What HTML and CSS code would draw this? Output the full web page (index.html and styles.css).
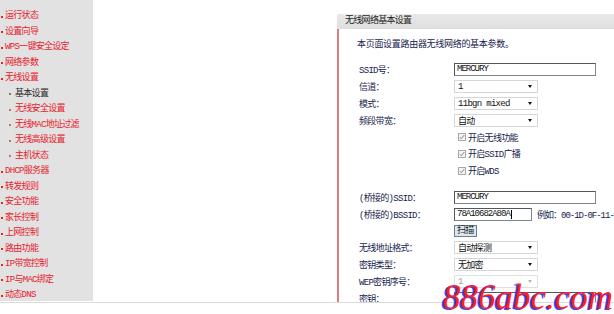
FILE: index.html
```html
<!DOCTYPE html>
<html lang="zh-CN">
<head>
<meta charset="utf-8">
<title>无线网络基本设置</title>
<link rel="stylesheet" href="styles.css">
</head>
<body>
<div class="page">
  <div class="frame">
    <nav class="menu">
      <div class="item top">运行状态</div>
      <div class="item top">设置向导</div>
      <div class="item top">WPS一键安全设定</div>
      <div class="item top">网络参数</div>
      <div class="item top">无线设置</div>
      <div class="item sub current">基本设置</div>
      <div class="item sub">无线安全设置</div>
      <div class="item sub">无线MAC地址过滤</div>
      <div class="item sub">无线高级设置</div>
      <div class="item sub">主机状态</div>
      <div class="item top">DHCP服务器</div>
      <div class="item top">转发规则</div>
      <div class="item top">安全功能</div>
      <div class="item top">家长控制</div>
      <div class="item top">上网控制</div>
      <div class="item top">路由功能</div>
      <div class="item top">IP带宽控制</div>
      <div class="item top">IP与MAC绑定</div>
      <div class="item top">动态DNS</div>
    </nav>
    <section class="panel">
      <div class="panel-head">无线网络基本设置</div>
      <div class="panel-body">
        <p class="desc">本页面设置路由器无线网络的基本参数。</p>
        <div class="form">
          <div class="row"><span class="label">SSID号：</span><span class="input wide">MERCURY</span></div>
          <div class="row"><span class="label">信道：</span><span class="select"><span>1</span><i class="arrow"></i></span></div>
          <div class="row"><span class="label">模式：</span><span class="select"><span>11bgn mixed</span><i class="arrow"></i></span></div>
          <div class="row"><span class="label">频段带宽：</span><span class="select"><span>自动</span><i class="arrow"></i></span></div>
          <div class="row"><span class="label"></span><span class="check"><svg width="8" height="8" viewBox="0 0 8 8"><rect x="0.5" y="0.5" width="7" height="7" fill="#f4f4f4" stroke="#a8a8a8"/><path d="M1.8 4.2 L3.3 5.7 L6.2 2.1" stroke="#7a8a7a" stroke-width="1" fill="none"/></svg>开启无线功能</span></div>
          <div class="row"><span class="label"></span><span class="check"><svg width="8" height="8" viewBox="0 0 8 8"><rect x="0.5" y="0.5" width="7" height="7" fill="#f4f4f4" stroke="#a8a8a8"/><path d="M1.8 4.2 L3.3 5.7 L6.2 2.1" stroke="#7a8a7a" stroke-width="1" fill="none"/></svg>开启SSID广播</span></div>
          <div class="row"><span class="label"></span><span class="check"><svg width="8" height="8" viewBox="0 0 8 8"><rect x="0.5" y="0.5" width="7" height="7" fill="#f4f4f4" stroke="#a8a8a8"/><path d="M1.8 4.2 L3.3 5.7 L6.2 2.1" stroke="#7a8a7a" stroke-width="1" fill="none"/></svg>开启WDS</span></div>
          <div class="spacer"></div>
          <div class="row"><span class="label">(桥接的)SSID：</span><span class="input wide">MERCURY</span></div>
          <div class="row"><span class="label">(桥接的)BSSID：</span><span class="input short">78A10682A80A<i class="caret"></i></span><span class="hint">例如：00-1D-0F-11-22-33</span></div>
          <div class="row"><span class="label"></span><span class="button">扫描</span></div>
          <div class="row"><span class="label">无线地址格式：</span><span class="select"><span>自动探测</span><i class="arrow"></i></span></div>
          <div class="row"><span class="label">密钥类型：</span><span class="select"><span>无加密</span><i class="arrow"></i></span></div>
          <div class="row"><span class="label">WEP密钥序号：</span><span class="select disabled"><span>1</span><i class="arrow"></i></span></div>
          <div class="row"><span class="label">密钥：</span><span class="input wide"></span></div>
        </div>
      </div>
    </section>
  </div>
  <div class="foot"></div>
  <div class="watermark">886abc.com</div>
</div>
</body>
</html>
```
FILE: styles.css
```css
* { box-sizing: border-box; }
html, body { margin: 0; padding: 0; background: #fff; }
body {
  width: 614px;
  height: 314px;
  overflow: hidden;
  font-family: "Liberation Mono", "Noto Sans CJK SC", monospace;
  font-size: 9px;
  letter-spacing: -0.7px;
  color: #16234e;
}
.page { position: relative; width: 614px; height: 314px; }
.frame {
  display: flex;
  height: 303px;
  border-bottom: 1px solid #dadada;
  overflow: hidden;
}
.menu {
  flex: 0 0 93px;
  height: 301px;
  background: #e2e2e2;
  padding-top: 9px;
}
.item {
  height: 15.5px;
  line-height: 15.5px;
  color: #e8202c;
  white-space: nowrap;
  display: flex;
  align-items: center;
}
.item::before {
  content: "";
  width: 2px;
  height: 2px;
  background: #e8202c;
  flex: 0 0 2px;
}
.item.top { padding-left: 1px; }
.item.top::before { margin-right: 2px; }
.item.sub { padding-left: 9px; }
.item.sub::before { margin-right: 4px; background: #d46a70; }
.item.current { color: #2a2a2a; }
.item.current::before { background: #777; }

.panel {
  flex: 1 1 auto;
  min-width: 0;
  margin-left: 244px;
  padding-top: 14px;
  overflow: hidden;
}
.panel-head {
  height: 15px;
  line-height: 15px;
  background: linear-gradient(#e9e9e9, #dedede);
  border-top-left-radius: 2px;
  padding-left: 8px;
  color: #1e1e1e;
  white-space: nowrap;
}
.panel-body {
  border-left: 2px solid #e27a82;
  height: 300px;
  padding: 8px 0 0 18px;
}
.desc {
  margin: 0;
  height: 16px;
  line-height: 16px;
  white-space: nowrap;
  letter-spacing: -0.3px;
}
.form { margin-top: 8.6px; padding-left: 2px; }
.row {
  display: flex;
  align-items: center;
  height: 16.8px;
  white-space: nowrap;
}
.spacer { height: 10px; }
.label { flex: 0 0 95px; }
.input {
  flex: 0 0 auto;
  height: 13px;
  line-height: 11px;
  border: 1px solid #7c8790;
  border-top-color: #4f5860;
  border-left-color: #4f5860;
  padding-left: 2px;
  color: #111;
  background: #fff;
  display: flex;
  align-items: center;
  overflow: hidden;
  letter-spacing: -1px;
}
.input.wide { width: 142px; }
.input.short { width: 78px; }
.caret { display: inline-block; width: 1px; height: 9px; background: #000; margin-left: 1px; }
.hint { flex: 0 0 auto; margin-left: 5px; letter-spacing: -1px; }
.select {
  flex: 0 0 84px;
  width: 84px;
  height: 13px;
  border: 1px solid #d6d6d6;
  display: flex;
  align-items: center;
  justify-content: space-between;
  padding: 0 5px 0 3px;
  color: #111;
  background: #fff;
}
.arrow {
  width: 0;
  height: 0;
  border-top: 3px solid #111;
  border-left: 2.5px solid transparent;
  border-right: 2.5px solid transparent;
}
.select.disabled { color: #a0a0a0; border-color: #e0e0e0; }
.select.disabled .arrow { border-top-color: #b5b5b5; }
.check {
  flex: 0 0 auto;
  display: flex;
  align-items: center;
  padding-left: 4px;
  gap: 2px;
  color: #16234e;
}
.check svg { display: block; }
.button {
  flex: 0 0 auto;
  height: 12px;
  line-height: 10px;
  padding: 0 2px;
  border: 1px solid #6d7f8f;
  background: #dce6ee;
  color: #1a1a1a;
}
.foot { height: 11px; }
.watermark {
  position: absolute;
  left: 443px;
  top: 281px;
  font-family: "Liberation Serif", serif;
  font-style: italic;
  font-size: 35px;
  line-height: 34px;
  letter-spacing: 0;
  color: #ff1e1e;
  text-shadow: -2px 1px 0 #3345ff;
  white-space: nowrap;
}
```
